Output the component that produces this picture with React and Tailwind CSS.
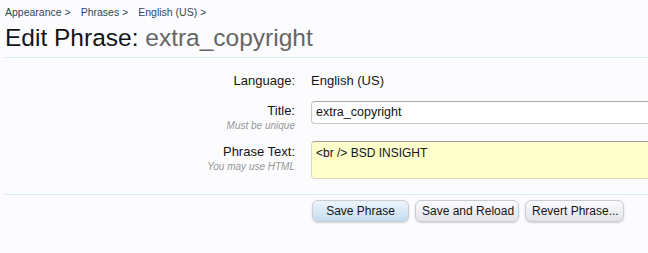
const btnBase =
  "h-[22px] shrink-0 whitespace-nowrap rounded-[6px] border border-[#c9ccd3] px-[6px] text-[12px] leading-none text-[#141414] shadow-[0_1px_2px_rgba(0,0,0,0.18)]";

export default function App() {
  return (
    <div
      className="min-h-[253px] w-[648px] overflow-hidden bg-[#fcfcff] text-[#141414]"
      style={{ fontFamily: '"Liberation Sans", Arial, sans-serif' }}
    >
      <div className="flex gap-[10px] px-[5px] pt-[4px] text-[10.5px] leading-[16px] text-[#2b485c]">
        <span>Appearance &gt;</span>
        <span>Phrases &gt;</span>
        <span>English (US) &gt;</span>
      </div>

      <h1 className="ml-[5px] mt-[3px] whitespace-nowrap text-[24.5px] leading-[30px] font-normal text-[#141414]">
        Edit Phrase: <span className="text-[#666666]">extra_copyright</span>
      </h1>

      <div className="ml-[4px] mt-[4px] border-t border-[#d7edf5]" />

      <div className="pt-[14px]">
        <div className="flex items-center">
          <div className="w-[295px] shrink-0 text-right text-[13px] leading-[18px]">Language:</div>
          <div className="pl-[16px] text-[13px] leading-[18px]">English (US)</div>
        </div>

        <div className="mt-[11px] flex">
          <div className="w-[295px] shrink-0 pt-[1px] text-right">
            <div className="text-[13px] leading-[18px]">Title:</div>
            <div className="text-[10px] italic leading-[11px] text-[#969696]">Must be unique</div>
          </div>
          <div className="shrink-0 pl-[16px]">
            <div className="flex h-[23px] w-[400px] items-center rounded-[4px] border border-[#c8c8c8] border-t-[#a8a8a8] bg-white px-[4px] text-[12.5px]">
              extra_copyright
            </div>
          </div>
        </div>

        <div className="mt-[10px] flex">
          <div className="w-[295px] shrink-0 pt-[2px] text-right">
            <div className="text-[13px] leading-[18px]">Phrase Text:</div>
            <div className="text-[10px] italic leading-[11px] text-[#969696]">You may use HTML</div>
          </div>
          <div className="shrink-0 pl-[16px]">
            <div className="h-[38px] w-[400px] rounded-[4px] border border-[#d8d8c0] border-t-[#a0a090] bg-[#ffffcc] px-[4px] pt-[4px] text-[12px] leading-[15px]">
              &lt;br /&gt; BSD INSIGHT
            </div>
          </div>
        </div>
      </div>

      <div className="ml-[4px] mt-[15px] border-t border-[#d7edf5]" />

      <div className="flex gap-[6px] pl-[312px] pt-[5px]">
        <button className={`${btnBase} w-[97px] border-[#b8cde0] bg-gradient-to-b from-[#eef5fb] to-[#c3dcf0]`}>
          Save Phrase
        </button>
        <button className={`${btnBase} w-[104px] bg-gradient-to-b from-[#fbfbfd] to-[#e2e4ea]`}>
          Save and Reload
        </button>
        <button className={`${btnBase} w-[99px] bg-gradient-to-b from-[#fbfbfd] to-[#e2e4ea]`}>
          Revert Phrase...
        </button>
      </div>
    </div>
  );
}
